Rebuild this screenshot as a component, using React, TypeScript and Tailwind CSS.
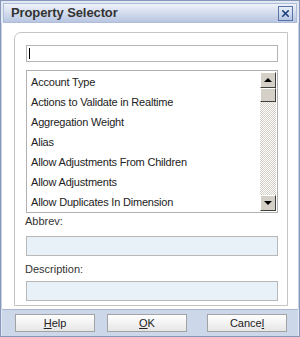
import { X } from 'lucide-react'

const items = [
  'Account Type',
  'Actions to Validate in Realtime',
  'Aggregation Weight',
  'Alias',
  'Allow Adjustments From Children',
  'Allow Adjustments',
  'Allow Duplicates In Dimension',
]

function ScrollButton({ down }: { down?: boolean }) {
  return (
    <div className="w-[16px] h-[16px] bg-[#d4d0c8] border border-t-white border-l-white border-r-[#404040] border-b-[#404040] flex items-center justify-center">
      <div
        className={
          down
            ? 'w-0 h-0 border-l-[4px] border-r-[4px] border-t-[4px] border-l-transparent border-r-transparent border-t-black'
            : 'w-0 h-0 border-l-[4px] border-r-[4px] border-b-[4px] border-l-transparent border-r-transparent border-b-black'
        }
      />
    </div>
  )
}

function FooterButton({ pre, key1, post }: { pre: string; key1: string; post: string }) {
  return (
    <button className="w-[80px] h-[18px] border border-[#a3a3a3] bg-gradient-to-b from-white to-[#e6e6e6] text-[11px] text-[#222] leading-none flex items-center justify-center">
      {pre}
      <span className="underline">{key1}</span>
      {post}
    </button>
  )
}

export default function App() {
  return (
    <div className="w-[300px] h-[337px] bg-[#e3e9f3] border border-[#8797b8] flex flex-col overflow-hidden font-['Liberation_Sans',Arial,sans-serif]">
      {/* Title bar */}
      <div className="mx-[2px] mt-[2px] h-[20px] shrink-0 border border-[#b0bdd8] bg-gradient-to-b from-[#eef2f9] via-[#d3dcee] to-[#b9c6e1] flex items-center justify-between pl-[7px] pr-[3px]">
        <span className="text-[13px] font-bold text-[#333] tracking-[-0.1px]">Property Selector</span>
        <div className="w-[15px] h-[15px] border border-[#5a74a8] bg-gradient-to-b from-[#e8eef8] to-[#b6c6e4] flex items-center justify-center">
          <X className="w-[11px] h-[11px] text-[#1d3f7a]" strokeWidth={3.5} />
        </div>
      </div>

      {/* Body */}
      <div className="flex-1 bg-white pl-[12px] pt-[9px] pb-[3px] border-l border-r border-[#c9d2e3] flex">
        <div className="w-[274px] border border-[#c4c4c4] rounded-tl-[7px] pl-[11px] pt-[12px] flex flex-col">
          {/* Search */}
          <div className="w-[252px] h-[17px] border border-[#b4b4b4] bg-white flex items-center pl-[2px]">
            <div className="w-px h-[11px] bg-black" />
          </div>

          {/* List */}
          <div className="mt-[8px] w-[252px] h-[143px] border border-[#b0b0b0] bg-white flex">
            <div className="flex-1 flex flex-col pt-[1px] overflow-hidden">
              {items.map((item) => (
                <div key={item} className="h-[20px] shrink-0 flex items-center pl-[4px] text-[11px] tracking-[-0.2px] text-[#222] whitespace-nowrap">
                  {item}
                </div>
              ))}
            </div>
            <div className="w-[16px] flex flex-col pt-[1px] pb-[1px] mr-[1px]">
              <ScrollButton />
              <div className="h-[14px] bg-[#d4d0c8] border border-t-white border-l-white border-r-[#404040] border-b-[#404040]" />
              <div className="flex-1 bg-[repeating-conic-gradient(#d4d0c8_0_25%,#ffffff_0_50%)] bg-[length:2px_2px]" />
              <ScrollButton down />
            </div>
          </div>

          {/* Abbrev */}
          <div className="mt-[1px] h-[14px] text-[11px] text-[#333] leading-[14px] -ml-px">Abbrev:</div>
          <div className="mt-[8px] w-[252px] h-[20px] border border-[#b8b8b8] bg-[#e8f0f8]" />

          {/* Description */}
          <div className="mt-[6px] h-[14px] text-[11px] text-[#333] leading-[14px] -ml-px">Description:</div>
          <div className="mt-[5px] w-[252px] h-[20px] border border-[#b8b8b8] bg-[#e8f0f8]" />
        </div>
      </div>

      {/* Footer */}
      <div className="h-[27px] shrink-0 bg-[#ccd7e9] border-t border-[#a8b6d0] mx-[1px] pl-[13px] pt-[4px] flex items-start">
        <FooterButton pre="" key1="H" post="elp" />
        <div className="w-[12px]" />
        <FooterButton pre="" key1="O" post="K" />
        <div className="w-[20px]" />
        <FooterButton pre="Cance" key1="l" post="" />
      </div>
    </div>
  )
}
